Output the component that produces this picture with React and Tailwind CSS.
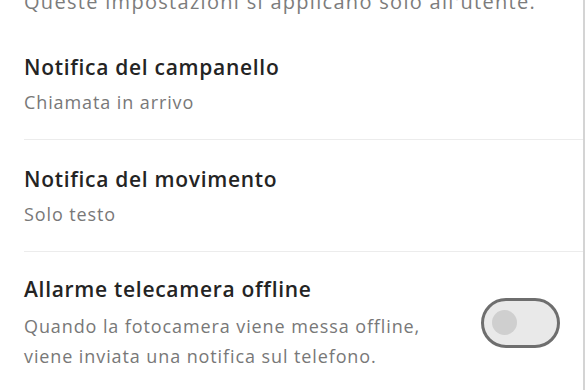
import React, { useState } from 'react';

const rows = [
  { title: 'Notifica del campanello', value: 'Chiamata in arrivo' },
  { title: 'Notifica del movimento', value: 'Solo testo' },
];

function Toggle({ on, onChange }) {
  return (
    <button
      type="button"
      onClick={() => onChange(!on)}
      className="flex items-center w-[79px] h-[50px] mb-[4px] rounded-full border-[3px] border-[#6e6e6e] bg-[#e9e9e9] px-[8px] shrink-0"
    >
      <span className="w-[25px] h-[25px] rounded-full bg-[#cfcfcf]" />
    </button>
  );
}

export default function App() {
  const [offline, setOffline] = useState(false);

  return (
    <div className="w-[585px] h-[390px] overflow-hidden bg-white border-r-2 border-[#d4d4d4] font-['Open_Sans',sans-serif]">
      <p className="pl-[24px] -mt-[10px] text-[20px] leading-[24px] tracking-[1.3px] text-[#7c7c7c]">
        Queste impostazioni si applicano solo all'utente.
      </p>

      <div className="pl-[24px] mt-[40px]">
        {rows.map((row) => (
          <div key={row.title} className="border-b border-[#ececec] pb-[25px] mb-[26px]">
            <div className="text-[21px] leading-[26px] font-semibold tracking-[0.7px] text-[#242424]">{row.title}</div>
            <div className="mt-[10px] text-[18px] leading-[24px] tracking-[0.9px] text-[#787878]">{row.value}</div>
          </div>
        ))}

        <div className="flex items-center justify-between pr-[23px]">
          <div>
            <div className="-mt-[2px] text-[21px] leading-[26px] font-semibold tracking-[0.7px] text-[#242424]">Allarme telecamera offline</div>
            <div className="mt-[9px] text-[18px] leading-[30px] tracking-[0.9px] text-[#787878]">
              Quando la fotocamera viene messa offline,
              <br />
              viene inviata una notifica sul telefono.
            </div>
          </div>
          <Toggle on={offline} onChange={setOffline} />
        </div>
      </div>
    </div>
  );
}
